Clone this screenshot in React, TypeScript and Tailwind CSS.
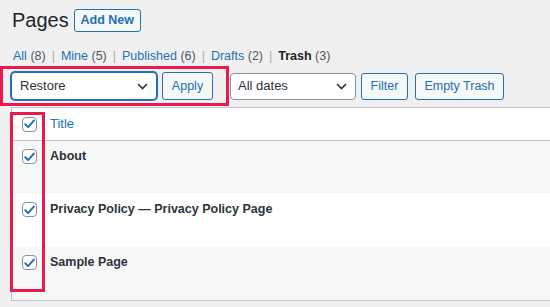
import React from "react";

const Chevron = () => (
	<svg width="11" height="7" viewBox="0 0 11 7" className="shrink-0">
		<path d="M1 1l4.5 4.5L10 1" fill="none" stroke="#2c3338" strokeWidth="1.6" />
	</svg>
);

const CheckBox = () => (
	<div className="w-[15px] h-[15px] shrink-0 rounded-[4px] border border-[#8c8f94] bg-white flex items-center justify-center">
		<svg width="11" height="10" viewBox="0 0 11 10">
			<path d="M1.3 5.2l2.8 2.9L9.8 1.6" fill="none" stroke="#2271b1" strokeWidth="2" strokeLinecap="round" strokeLinejoin="round" />
		</svg>
	</div>
);

const rows = ["About", "Privacy Policy — Privacy Policy Page", "Sample Page"];

export default function App() {
	return (
		<div
			className="relative w-[550px] h-[307px] overflow-hidden bg-[#f0f0f1] text-[#1d2327]"
			style={{ fontFamily: '"Liberation Sans", Arial, sans-serif' }}
		>
			{/* heading */}
			<div className="flex items-center pl-[12px] pt-[9px]">
				<h1 className="text-[20px] leading-[23px] text-[#1d2327] mr-[5px]">Pages</h1>
				<button className="h-[23px] w-[67px] rounded-[3px] border border-[#2271b1] bg-[#f6f7f7] text-[12.5px] font-bold text-[#2271b1]">
					Add New
				</button>
			</div>

			{/* status links */}
			<div className="flex items-center pl-[13px] mt-[16px] h-[16px] text-[12.5px] text-[#50575e]">
				<span><span className="text-[#2271b1]">All</span> (8)</span>
				<span className="mx-[6px] text-[#a7aaad]">|</span>
				<span><span className="text-[#2271b1]">Mine</span> (5)</span>
				<span className="mx-[6px] text-[#a7aaad]">|</span>
				<span><span className="text-[#2271b1]">Published</span> (6)</span>
				<span className="mx-[6px] text-[#a7aaad]">|</span>
				<span><span className="text-[#2271b1]">Drafts</span> (2)</span>
				<span className="mx-[6px] text-[#a7aaad]">|</span>
				<span><span className="font-bold text-[#1d2327]">Trash</span> (3)</span>
			</div>

			{/* toolbar */}
			<div className="flex items-center mt-[2px]">
				<div className="flex items-center gap-[5px] border-[3px] border-[#ea1a4f] pl-[8px] pr-[13px] py-[3px]">
					<div className="h-[28px] w-[146px] flex items-center justify-between rounded-[4px] border border-[#2271b1] shadow-[0_0_0_1px_#2271b1] bg-white pl-[8px] pr-[8px] text-[13px] text-[#2c3338]">
						<span>Restore</span>
						<Chevron />
					</div>
					<button className="h-[28px] w-[51px] rounded-[3px] border border-[#2271b1] bg-[#f6f7f7] text-[12.5px] text-[#2271b1]">
						Apply
					</button>
				</div>
				<div className="ml-[1px] h-[27px] w-[126px] flex items-center justify-between rounded-[4px] border border-[#8c8f94] bg-white pl-[7px] pr-[8px] text-[13px] text-[#2c3338]">
					<span>All dates</span>
					<Chevron />
				</div>
				<button className="ml-[5px] h-[27px] w-[47px] rounded-[3px] border border-[#2271b1] bg-[#f6f7f7] text-[12.5px] text-[#2271b1]">
					Filter
				</button>
				<button className="ml-[7px] h-[27px] w-[89px] rounded-[3px] border border-[#2271b1] bg-[#f6f7f7] text-[12.5px] text-[#2271b1]">
					Empty Trash
				</button>
			</div>

			{/* table */}
			<div className="ml-[11px] mt-[1px] w-[600px] border border-r-0 border-[#c3c4c7] bg-white">
				<div className="flex items-center h-[33px] border-b border-[#c3c4c7] bg-white">
					<div className="w-[38px] pl-[10px] flex items-center">
						<CheckBox />
					</div>
					<span className="text-[13px] leading-[16px] pb-[1px] text-[#2271b1]">Title</span>
				</div>
				{rows.map((r, i) => (
					<div
						key={r}
						className={`flex items-start h-[53px] pt-[8px] ${i % 2 === 0 ? "bg-[#f6f7f7]" : "bg-white"}`}
					>
						<div className="w-[38px] pl-[10px] flex items-center">
							<CheckBox />
						</div>
						<span className="text-[12.5px] leading-[15px] font-bold text-[#2c3338]">{r}</span>
					</div>
				))}
			</div>

			{/* highlight around row checkboxes */}
			<div className="absolute left-[10px] top-[112px] w-[35px] h-[180px] border-[3px] border-[#ea1a4f]" />
		</div>
	);
}
